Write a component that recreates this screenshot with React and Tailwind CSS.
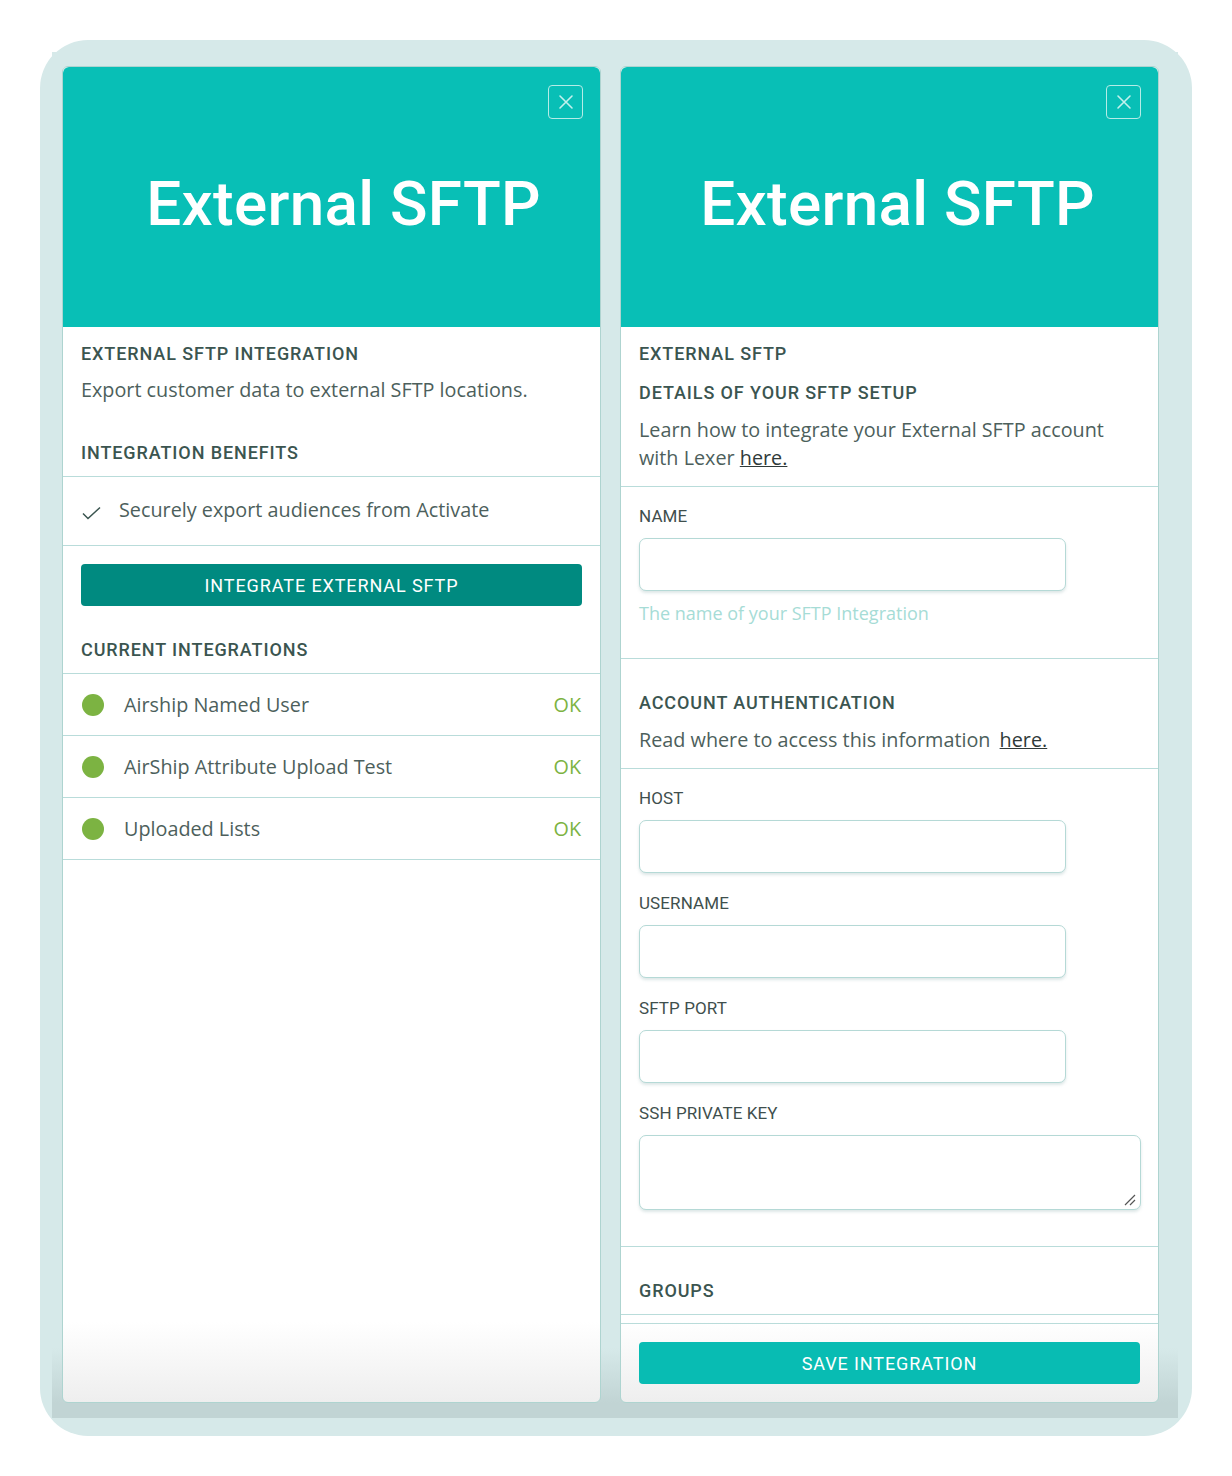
import React from "react";

const HEAD = { fontFamily: "Roboto, 'DejaVu Sans', sans-serif" };
const BODY = { fontFamily: "'Open Sans', 'Noto Sans', sans-serif" };

function CloseBtn() {
  return (
    <div className="absolute right-[17px] top-[18px] w-[35px] h-[34px] rounded-[4px] border border-[#b5ece7] flex items-center justify-center">
      <svg width="16" height="16" viewBox="0 0 16 16" fill="none" stroke="#c4f1ed" strokeWidth="1.6" strokeLinecap="round">
        <path d="M2 2 L14 14 M14 2 L2 14" />
      </svg>
    </div>
  );
}

function Header({ offset }) {
  return (
    <div className={"relative shrink-0 h-[260px] bg-[#08bfb6] rounded-t-[6px] flex items-center justify-center " + offset}>
      <CloseBtn />
      <div
        className="text-white text-[62px] font-medium tracking-[0.3px] leading-none mt-[14px]"
        style={HEAD}
      >
        External SFTP
      </div>
    </div>
  );
}

function H({ children, className = "" }) {
  return (
    <div
      className={"text-[18px] leading-[24px] font-medium tracking-[0.9px] text-[#3b5550] " + className}
      style={HEAD}
    >
      {children}
    </div>
  );
}

function Label({ children, className = "" }) {
  return (
    <div
      className={"text-[17px] leading-[22px] tracking-[0.1px] text-[#3f4f4d] " + className}
      style={HEAD}
    >
      {children}
    </div>
  );
}

function P({ children, className = "" }) {
  return (
    <div className={"text-[19.8px] leading-[28px] text-[#4d5f5c] " + className} style={BODY}>
      {children}
    </div>
  );
}

function Input({ wide }) {
  return (
    <div
      className={
        (wide ? "w-[502px] h-[75px]" : "w-[427px] h-[53px]") +
        " relative rounded-[7px] border border-[#b5d9d6] bg-white shadow-[0_2px_3px_rgba(120,160,160,0.25)]"
      }
    >
      {wide && (
        <svg className="absolute right-[4px] bottom-[3px]" width="12" height="12" viewBox="0 0 12 12" stroke="#555" strokeWidth="1.2">
          <path d="M1 11 L11 1 M6 11 L11 6" />
        </svg>
      )}
    </div>
  );
}

function Row({ name }) {
  return (
    <div className="shrink-0 h-[62px] border-b border-[#b9dcda] flex items-center px-[19px]">
      <div className="w-[22px] h-[22px] rounded-full bg-[#7cb342]" />
      <div className="ml-[20px] flex-1 text-[19.8px] text-[#4d5f5c]" style={BODY}>{name}</div>
      <div className="text-[19.8px] text-[#7cb342]" style={BODY}>OK</div>
    </div>
  );
}

const panelCls =
  "w-[539px] rounded-[6px] border border-[#aed4d0] bg-[linear-gradient(to_bottom,#ffffff_calc(100%-80px),#eeeeee)] flex flex-col overflow-hidden";

export default function App() {
  return (
    <div className="bg-white p-[40px] w-[1232px] h-[1476px]">
      <div className="bg-[#d6e9e9] rounded-[48px] pt-[12px] pl-[12px] pr-[14px] pb-[18px] h-full">
        <div className="h-full bg-[linear-gradient(to_bottom,#d6e9e9_calc(100%-70px),#c1d4d4_calc(100%-15px),#c1d4d4)] pl-[10px] pt-[14px] pr-[19px] pb-[15px] flex gap-[19px]">
          {/* LEFT */}
          <div className={panelCls}>
            <Header offset="pl-[24px]" />
            <div className="shrink-0 px-[18px] pt-[15px] pb-[11px] border-b border-[#b9dcda]">
              <H>EXTERNAL SFTP INTEGRATION</H>
              <P className="mt-[10px]">Export customer data to external SFTP locations.</P>
              <H className="mt-[37px]">INTEGRATION BENEFITS</H>
            </div>
            <div className="shrink-0 h-[69px] border-b border-[#b9dcda] flex items-center px-[19px]">
              <svg width="19" height="14" viewBox="0 0 19 14" fill="none" stroke="#3b5550" strokeWidth="1.5" className="mt-[4px]">
                <path d="M1 7.5 L6 12.5 L18 1.5" />
              </svg>
              <P className="ml-[18px] -mt-[2px]">Securely export audiences from Activate</P>
            </div>
            <div className="shrink-0 px-[18px] pt-[18px] pb-[11px] border-b border-[#b9dcda]">
              <div className="h-[42px] rounded-[4px] bg-[#008a80] flex items-center justify-center text-white text-[18px] tracking-[0.9px]" style={HEAD}>
                INTEGRATE EXTERNAL SFTP
              </div>
              <H className="mt-[32px]">CURRENT INTEGRATIONS</H>
            </div>
            <Row name="Airship Named User" />
            <Row name="AirShip Attribute Upload Test" />
            <Row name="Uploaded Lists" />
          </div>

          {/* RIGHT */}
          <div className={panelCls}>
            <Header offset="pl-[16px]" />
            <div className="shrink-0 px-[18px] pt-[15px] pb-[14px] border-b border-[#b9dcda]">
              <H>EXTERNAL SFTP</H>
              <H className="mt-[15px]">DETAILS OF YOUR SFTP SETUP</H>
              <P className="mt-[11px]">
                Learn how to integrate your External SFTP account with Lexer{" "}
                <span className="underline text-[#2f3a39]">here.</span>
              </P>
            </div>
            <div className="shrink-0 px-[18px] pt-[18px] pb-[33px] border-b border-[#b9dcda]">
              <Label>NAME</Label>
              <div className="mt-[11px]"><Input /></div>
              <div className="mt-[10px] text-[18px] leading-[24px] text-[#a6dcd6]" style={BODY}>
                The name of your SFTP Integration
              </div>
            </div>
            <div className="shrink-0 px-[18px] pt-[32px] pb-[14px] border-b border-[#b9dcda]">
              <H>ACCOUNT AUTHENTICATION</H>
              <P className="mt-[11px]">
                Read where to access this information{" "}
                <span className="underline text-[#2f3a39] ml-[4px]">here.</span>
              </P>
            </div>
            <div className="shrink-0 px-[18px] pt-[18px] pb-[36px] border-b border-[#b9dcda]">
              <Label>HOST</Label>
              <div className="mt-[11px]"><Input /></div>
              <Label className="mt-[19px]">USERNAME</Label>
              <div className="mt-[11px]"><Input /></div>
              <Label className="mt-[19px]">SFTP PORT</Label>
              <div className="mt-[11px]"><Input /></div>
              <Label className="mt-[19px]">SSH PRIVATE KEY</Label>
              <div className="mt-[11px]"><Input wide /></div>
            </div>
            <div className="shrink-0 px-[18px] pt-[32px] pb-[11px] border-b border-[#b9dcda]">
              <H>GROUPS</H>
            </div>
            <div className="shrink-0 h-[9px] border-b border-[#b9dcda]" />
            <div className="shrink-0 px-[18px] pt-[18px] pb-[19px]">
              <div className="h-[42px] rounded-[4px] bg-[#08bcb3] flex items-center justify-center text-white text-[18px] tracking-[0.9px]" style={HEAD}>
                SAVE INTEGRATION
              </div>
            </div>
          </div>
        </div>
      </div>
    </div>
  );
}
